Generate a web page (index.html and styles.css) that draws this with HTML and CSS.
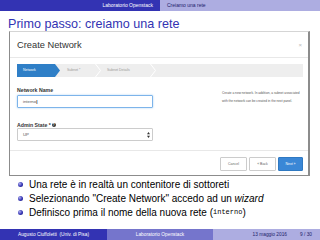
FILE: index.html
```html
<!DOCTYPE html>
<html lang="it">
  <head>
    <meta charset="UTF-8" />
    <title>Primo passo: creiamo una rete</title>
    <link rel="stylesheet" href="styles.css">
  </head>
  <body>
    <div class="headline">
      <div class="sec">Laboratorio Openstack</div>
      <div class="sub">Creiamo una rete</div>
    </div>

    <h1 class="frametitle">Primo passo: creiamo una rete</h1>

    <div class="shot">
      <div class="modal-head">
        <span class="modal-title">Create Network</span>
        <span class="close">&times;</span>
      </div>
      <div class="modal-body">
        <div class="steps">
          <div class="step active">Network</div>
          <div class="step step-2">Subnet *</div>
          <svg class="chev" width="6" height="13" viewBox="0 0 6 13">
            <polyline points="0.5,0 5.5,6.5 0.5,13" fill="none" stroke="#fff" stroke-width="1" />
          </svg>
          <div class="step step-3">Subnet Details</div>
          <svg class="chev" width="6" height="13" viewBox="0 0 6 13">
            <polyline points="0.5,0 5.5,6.5 0.5,13" fill="none" stroke="#fff" stroke-width="1" />
          </svg>
        </div>
        <div class="form-row">
          <div class="form-col">
            <div class="lbl">Network Name</div>
            <div class="field focus">interno<span class="caret">|</span></div>
            <div class="lbl lbl-admin">Admin State * <span class="qmark">?</span></div>
            <div class="field select">
              UP
              <svg class="updown" width="3" height="6" viewBox="0 0 3 6">
                <polygon points="1.5,0 3,2.2 0,2.2" fill="#333" />
                <polygon points="1.5,6 3,3.8 0,3.8" fill="#333" />
              </svg>
            </div>
          </div>
          <div class="help">
            Create a new network. In addition, a subnet associated<br />
            with the network can be created in the next panel.
          </div>
        </div>
      </div>
      <div class="modal-foot">
        <span class="btn">Cancel</span>
        <span class="btn">&laquo; Back</span>
        <span class="btn btn-primary">Next &raquo;</span>
      </div>
    </div>

    <ul class="items">
      <li><span class="ball"></span>Una rete è in realtà un contenitore di sottoreti</li>
      <li><span class="ball"></span>Selezionando "Create Network" accedo ad un&nbsp;<em>wizard</em></li>
      <li><span class="ball"></span>Definisco prima il nome della nuova rete (<code>interno</code>)</li>
    </ul>

    <div class="footline">
      <div class="f-author">Augusto Ciuffoletti &nbsp;(Univ. di Pisa)</div>
      <div class="f-title">Laboratorio Openstack</div>
      <div class="f-date"><span>13 maggio 2016</span><span class="f-page">9 / 30</span></div>
    </div>
  </body>
</html>
```
FILE: styles.css
```css
* {
  box-sizing: border-box;
}
body {
  margin: 0;
  width: 320px;
  height: 240px;
  display: flex;
  flex-direction: column;
  overflow: hidden;
  background: #fff;
  color: #000;
  font-family: "Liberation Sans", Arial, sans-serif;
}

/* beamer head line */
.headline {
  display: flex;
  height: 11px;
  font-size: 5px;
  line-height: 11px;
}
.headline .sec {
  width: 160px;
  padding-right: 7px;
  text-align: right;
  background: #3333b3;
  color: #fff;
}
.headline .sub {
  flex: 1;
  padding-left: 7px;
  background: #adade1;
  color: #22226a;
}

.frametitle {
  margin: 0;
  height: 20px;
  padding: 6px 0 0 8px;
  font-size: 12.6px;
  line-height: 14px;
  font-weight: normal;
  color: #3333b3;
}

/* the horizon screenshot */
.shot {
  margin-left: 9px;
  width: 301px;
  height: 145px;
  display: flex;
  flex-direction: column;
  border: 1px solid #8c8c8c;
  border-top-color: #d5d5d5;
  border-right-width: 2px;
  color: #333;
}
.modal-head {
  height: 26px;
  display: flex;
  align-items: center;
  justify-content: space-between;
  padding: 0 6px 0 7px;
  border-bottom: 1px solid #e8e8e8;
}
.modal-title {
  font-size: 9.3px;
}
.close {
  font-size: 6px;
  color: #bbb;
}
.modal-body {
  flex: 1;
  padding: 6px 5px 0 7px;
}
.steps {
  display: flex;
  height: 13px;
  background: #eee;
  font-size: 3.5px;
  line-height: 13px;
  color: #999;
}
.step {
  height: 13px;
}
.step.active {
  width: 43px;
  padding-left: 6px;
  background: #2f7fc7;
  color: #fff;
  clip-path: polygon(0 0, 38px 0, 43px 50%, 38px 100%, 0 100%);
}
.step-2 {
  width: 35px;
  padding-left: 7px;
}
.step-3 {
  width: 49px;
  padding-left: 6px;
}
.form-row {
  display: flex;
  margin-top: 10px;
}
.form-col {
  flex: none;
  width: 136px;
}
.lbl {
  height: 6px;
  font-size: 5.2px;
  line-height: 6px;
  font-weight: bold;
  color: #333;
}
.lbl-admin {
  margin-top: 14px;
  display: flex;
  align-items: center;
  gap: 1px;
}
.qmark {
  width: 4px;
  height: 4px;
  border-radius: 50%;
  background: #333;
  color: #fff;
  font-size: 3px;
  line-height: 4px;
  text-align: center;
}
.field {
  height: 13px;
  margin-top: 2px;
  padding-left: 5px;
  border: 1px solid #ccc;
  border-radius: 1px;
  font-size: 4.3px;
  line-height: 11px;
  color: #555;
}
.field.focus {
  border-color: #7db4ea;
  box-shadow: 0 0 2px rgba(102, 175, 233, 0.6);
}
.field.select {
  margin-top: 0;
  display: flex;
  align-items: center;
  justify-content: space-between;
  padding-right: 2px;
}
.caret {
  color: #000;
  font-weight: bold;
}
.help {
  margin: 2px 0 0 69px;
  font-size: 3.2px;
  line-height: 8px;
  color: #555;
  white-space: nowrap;
}
.modal-foot {
  height: 25px;
  display: flex;
  justify-content: flex-end;
  gap: 2px;
  padding: 6px 5px 0 0;
  border-top: 1px solid #e8e8e8;
}
.btn {
  width: 27px;
  height: 14px;
  border: 1px solid #ccc;
  border-radius: 1px;
  font-size: 3.5px;
  line-height: 12px;
  text-align: center;
  color: #666;
}
.btn-primary {
  width: 25px;
  background: #3a87d6;
  border-color: #2f79c2;
  color: #fff;
}

/* itemize */
.items {
  margin: 1px 0 0;
  padding: 0;
  list-style: none;
}
.items li {
  display: flex;
  align-items: center;
  height: 14px;
  padding-left: 18px;
  font-size: 10px;
  white-space: nowrap;
}
.ball {
  width: 5px;
  height: 5px;
  margin-right: 6px;
  border-radius: 50%;
  background: radial-gradient(circle at 35% 35%, #b0b0f0, #3333b3 55%, #1c1c75);
}
.items code {
  font-family: "Liberation Mono", monospace;
  font-size: 7px;
}

/* beamer foot line */
.footline {
  margin-top: auto;
  display: flex;
  height: 11px;
  font-size: 4.8px;
  line-height: 11px;
}
.f-author {
  width: 107px;
  text-align: center;
  background: #3333b3;
  color: #fff;
}
.f-title {
  width: 106px;
  text-align: center;
  background: #7575cc;
  color: #fff;
}
.f-date {
  flex: 1;
  display: flex;
  justify-content: flex-end;
  gap: 13px;
  padding-right: 8px;
  background: #adade1;
  color: #22226a;
}
```
